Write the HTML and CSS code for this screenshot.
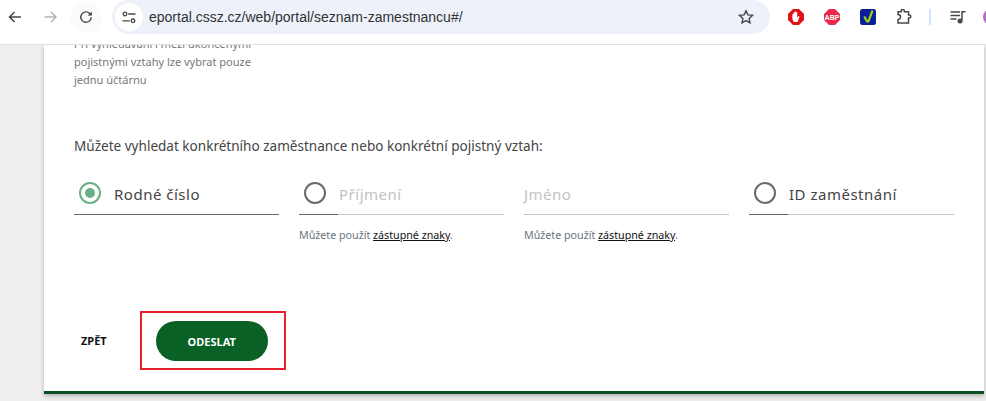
FILE: index.html
```html
<!DOCTYPE html>
<html lang="cs">
<head>
<meta charset="utf-8">
<title>Seznam zaměstnanců</title>
<link rel="stylesheet" href="styles.css">
</head>
<body>
<div class="toolbar">
  <svg class="nav" width="16" height="16" viewBox="0 0 16 16"><path d="M14 8H3M7.500 3L2.500 8l5 5" fill="none" stroke="#474747" stroke-width="1.500"/></svg>
  <svg class="nav" width="16" height="16" viewBox="0 0 16 16"><path d="M1.500 8h11M8 3l5 5-5 5" fill="none" stroke="#b3b3b3" stroke-width="1.500"/></svg>
  <svg class="nav nav-reload" width="16" height="16" viewBox="0 0 16 16"><path d="M13.200 8.200A5.200 5.200 0 1 1 11.700 4.400L13.200 6" fill="none" stroke="#474747" stroke-width="1.400"/><path d="M13.800 2.400v4.200H9.600z" fill="#474747"/></svg>
  <div class="omnibox">
    <span class="tune">
      <svg width="14" height="13" viewBox="0 0 14 13"><g fill="none" stroke="#474747" stroke-width="1.300"><circle cx="3" cy="3" r="1.800"/><path d="M6.200 3h7.300M.5 9.800h7.300"/><circle cx="11" cy="9.800" r="1.800"/></g></svg>
    </span>
    <span class="url">eportal.cssz.cz/web/portal/seznam-zamestnancu#/</span>
    <svg class="star" width="16" height="16" viewBox="0 0 16 16"><path d="M8 1.800l1.900 4.100 4.500.5-3.300 3 .9 4.400L8 11.600l-4 2.200.9-4.400-3.300-3 4.500-.5z" fill="none" stroke="#474747" stroke-width="1.400"/></svg>
  </div>
  <div class="extensions">
    <svg width="16" height="16" viewBox="0 0 16 16"><path d="M5 0h6l5 5v6l-5 5H5l-5-5V5z" fill="#e3101a"/><path d="M4.300 9.500V5.200h1.200V8V3.500h1.200V8V2.500h1.300V8V3.300h1.200V8.600l1.300-1.500 1 .7-1.700 4.600a1 1 0 0 1-1 .6H6.500a1.500 1.500 0 0 1-1.300-.9z" fill="#fff"/></svg>
    <svg width="16" height="16" viewBox="0 0 16 16"><path d="M5 0h6l5 5v6l-5 5H5l-5-5V5z" fill="#ea2a4a"/><text x="8" y="10.700" class="abp">ABP</text></svg>
    <svg width="16" height="16" viewBox="0 0 16 16"><rect width="16" height="16" rx="2.500" fill="#0a1f9a"/><path d="M4.300 7.500l2.700 5h1.400L12.500 1.500" fill="none" stroke="#a3d017" stroke-width="2.200"/></svg>
    <svg width="16" height="16" viewBox="0 0 16 16"><path d="M2 2.800h3.200V2a1.600 1.600 0 0 1 3.200 0v.8h4.100V6h.8a1.500 1.500 0 0 1 0 3h-.8v5H2v-3.500a2.500 2.500 0 0 0 0-5z" fill="none" stroke="#474747" stroke-width="1.500"/></svg>
    <span class="divider"></span>
    <svg width="16" height="16" viewBox="0 0 16 16"><path d="M.5 3h9.500M.5 6.500h9.500M.5 10h6" fill="none" stroke="#474747" stroke-width="1.400"/><path d="M12 11.500V2.800h3.500" fill="none" stroke="#474747" stroke-width="1.500"/><circle cx="10" cy="12" r="2.500" fill="#474747"/></svg>
    <span class="avatar"></span>
  </div>
</div>
<div class="page">
  <div class="card">
    <p class="note">Při vyhledávání i mezi ukončenými<br>pojistnými vztahy lze vybrat pouze<br>jednu účtárnu</p>
    <p class="lead">Můžete vyhledat konkrétního zaměstnance nebo konkrétní pojistný vztah:</p>
    <div class="fields">
      <div class="field">
        <div class="input is-active"><span class="radio is-checked"></span><span class="label">Rodné číslo</span></div>
      </div>
      <div class="field">
        <div class="input"><span class="radio"></span><span class="label is-muted">Příjmení</span></div>
        <p class="help">Můžete použít <a href="#">zástupné znaky</a>.</p>
      </div>
      <div class="field">
        <div class="input is-plain"><span class="label is-muted">Jméno</span></div>
        <p class="help">Můžete použít <a href="#">zástupné znaky</a>.</p>
      </div>
      <div class="field">
        <div class="input"><span class="radio"></span><span class="label">ID zaměstnání</span></div>
      </div>
    </div>
    <div class="actions">
      <a class="back" href="#">ZPĚT</a>
      <div class="highlight"><button class="submit" type="button">ODESLAT</button></div>
    </div>
  </div>
</div>
</body>
</html>
```

FILE: styles.css
```css
html, body { margin: 0; height: 100%; overflow: hidden; }
body {
  background: #eeeeee;
  font-family: "Noto Sans", "Open Sans", sans-serif;
  color: #333;
}
p { margin: 0; }

.toolbar {
  height: 45px;
  box-sizing: border-box;
  display: flex;
  align-items: flex-start;
  background: #fff;
  border-bottom: 1px solid #e0e0e0;
  padding-left: 7px;
}
.nav { flex: none; margin-top: 9px; margin-right: 20px; }
.nav:nth-child(2) { margin-right: 19px; }
.nav-reload {
  margin-right: 18px;
  border-radius: 50%;
  background: #fbfbfb;
  box-shadow: 0 0 0 8px #fbfbfb;
}

.omnibox {
  width: 658px;
  height: 34px;
  flex: none;
  display: flex;
  align-items: center;
  background: #edf2fa;
  border-radius: 17px;
}
.tune {
  width: 28px;
  height: 28px;
  flex: none;
  margin-left: 3px;
  border-radius: 50%;
  background: #fff;
  display: flex;
  align-items: center;
  justify-content: center;
}
.url {
  flex: 1;
  margin-left: 6px;
  font-size: 14px;
  color: #333;
  font-family: "Liberation Sans", sans-serif;
}
.star { flex: none; margin-right: 16px; }

.extensions {
  display: flex;
  align-items: center;
  gap: 20px;
  margin-left: 18px;
  height: 34px;
}
.extensions > * { flex: none; }
.abp {
  font-family: "Liberation Sans", sans-serif;
  font-size: 7px;
  font-weight: 700;
  fill: #fff;
  text-anchor: middle;
}
.divider {
  width: 2px;
  height: 16px;
  background: #d3e3fd;
  margin: 0 -1px 0 -3px;
}
.avatar {
  width: 16px;
  height: 16px;
  border-radius: 50%;
  background: #b46cc8;
  margin-left: -3px;
}

.page {
  height: 356px;
  overflow: hidden;
  padding-left: 44px;
}
.card {
  display: flow-root;
  width: 940px;
  height: 349px;
  box-sizing: border-box;
  background: #fff;
  border-bottom: 3px solid #0b4f22;
  box-shadow: 0 2px 4px rgba(0, 0, 0, 0.25);
  padding-left: 30px;
}
.note {
  margin-top: -10px;
  font-size: 11px;
  line-height: 18px;
  color: #777;
}
.lead {
  margin-top: 48px;
  font-size: 13.550px;
  line-height: 18px;
  color: #444;
}

.fields {
  display: grid;
  grid-template-columns: repeat(4, 205px);
  column-gap: 20px;
  margin-top: 19px;
  height: 137px;
}
.input {
  height: 41px;
  box-sizing: border-box;
  display: flex;
  align-items: center;
  gap: 13px;
  padding: 0 5px 2px;
  border-bottom: 1px solid #c4c4c4;
  position: relative;
}
.input::after {
  content: "";
  position: absolute;
  left: 0;
  bottom: -1px;
  width: 39px;
  height: 1px;
  background: #666;
}
.input.is-active { border-bottom-color: #666; }
.input.is-plain { padding-left: 0; }
.input.is-plain::after { display: none; }
.radio {
  width: 22px;
  height: 22px;
  box-sizing: border-box;
  border: 2px solid #6a6a6a;
  border-radius: 50%;
  flex: none;
}
.radio.is-checked {
  border-color: #68b088;
  padding: 4px;
  background: #68b088 content-box;
}
.label {
  padding-top: 2px;
  font-size: 15px;
  letter-spacing: 0.5px;
  color: #444;
}
.label.is-muted { color: #c2c2c2; }
.help {
  margin-top: 12px;
  font-size: 10.700px;
  line-height: 16px;
  color: #6b7480;
}
.help a { color: #111; }

.actions {
  display: flex;
  align-items: center;
}
.back {
  margin-left: 7px;
  margin-right: 33px;
  font-size: 11px;
  font-weight: 700;
  color: #111;
  text-decoration: none;
}
.highlight {
  border: 2px solid #e8202e;
  padding: 8px 16px 7px 14px;
  display: flex;
}
.submit {
  width: 112px;
  height: 40px;
  border: 0;
  border-radius: 20px;
  background: #0a6126;
  color: #fff;
  font-family: inherit;
  font-size: 11px;
  font-weight: 700;
}
```
